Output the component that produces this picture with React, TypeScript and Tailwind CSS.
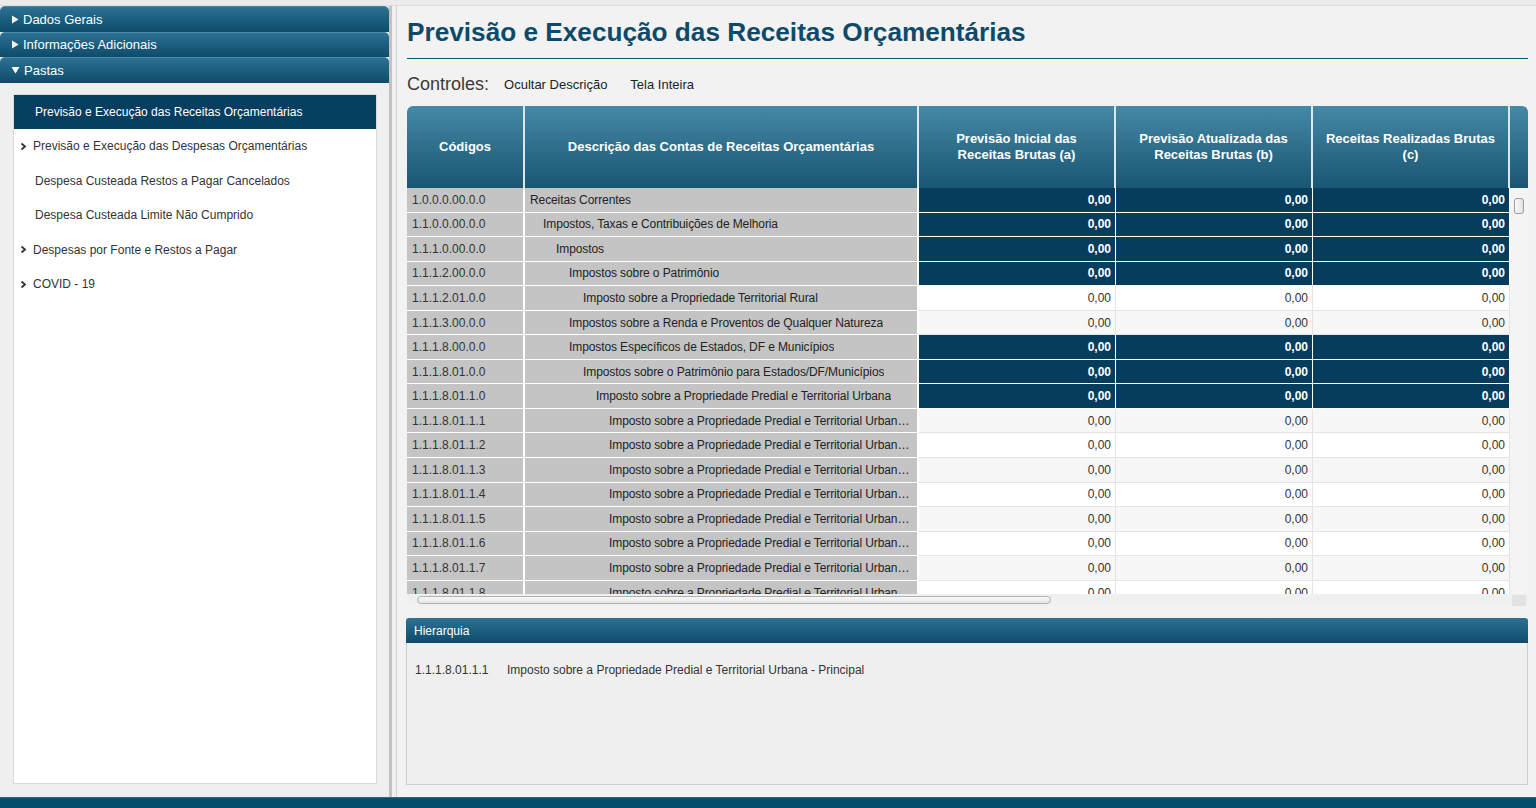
import React from "react";

type Row = { code: string; desc: string; level: number; bold: boolean };

const rows: Row[] = [
  { code: "1.0.0.0.00.0.0", desc: "Receitas Correntes", level: 0, bold: true },
  { code: "1.1.0.0.00.0.0", desc: "Impostos, Taxas e Contribuições de Melhoria", level: 1, bold: true },
  { code: "1.1.1.0.00.0.0", desc: "Impostos", level: 2, bold: true },
  { code: "1.1.1.2.00.0.0", desc: "Impostos sobre o Patrimônio", level: 3, bold: true },
  { code: "1.1.1.2.01.0.0", desc: "Imposto sobre a Propriedade Territorial Rural", level: 4, bold: false },
  { code: "1.1.1.3.00.0.0", desc: "Impostos sobre a Renda e Proventos de Qualquer Natureza", level: 3, bold: false },
  { code: "1.1.1.8.00.0.0", desc: "Impostos Específicos de Estados, DF e Municípios", level: 3, bold: true },
  { code: "1.1.1.8.01.0.0", desc: "Impostos sobre o Patrimônio para Estados/DF/Municípios", level: 4, bold: true },
  { code: "1.1.1.8.01.1.0", desc: "Imposto sobre a Propriedade Predial e Territorial Urbana", level: 5, bold: true },
  { code: "1.1.1.8.01.1.1", desc: "Imposto sobre a Propriedade Predial e Territorial Urbana - Principal", level: 6, bold: false },
  { code: "1.1.1.8.01.1.2", desc: "Imposto sobre a Propriedade Predial e Territorial Urbana - Multas e Juros", level: 6, bold: false },
  { code: "1.1.1.8.01.1.3", desc: "Imposto sobre a Propriedade Predial e Territorial Urbana - Dívida Ativa", level: 6, bold: false },
  { code: "1.1.1.8.01.1.4", desc: "Imposto sobre a Propriedade Predial e Territorial Urbana - Dívida Ativa - Multas", level: 6, bold: false },
  { code: "1.1.1.8.01.1.5", desc: "Imposto sobre a Propriedade Predial e Territorial Urbana - Principal - Outros", level: 6, bold: false },
  { code: "1.1.1.8.01.1.6", desc: "Imposto sobre a Propriedade Predial e Territorial Urbana - Multas - Outros", level: 6, bold: false },
  { code: "1.1.1.8.01.1.7", desc: "Imposto sobre a Propriedade Predial e Territorial Urbana - Dívida - Outros", level: 6, bold: false },
  { code: "1.1.1.8.01.1.8", desc: "Imposto sobre a Propriedade Predial e Territorial Urbana - Outros", level: 6, bold: false },
  { code: "1.1.1.8.01.1.9", desc: "Imposto sobre a Propriedade Predial e Territorial Urbana - Outros", level: 6, bold: false },
];

const indent = [
  "pl-[5px]",
  "pl-[18px]",
  "pl-[31px]",
  "pl-[44px]",
  "pl-[58px]",
  "pl-[71px]",
  "pl-[84px]",
];

const font = "font-['Liberation_Sans',Arial,sans-serif]";

function TriRight() {
  return (
    <svg width="8" height="9" viewBox="0 0 8 9" className="shrink-0">
      <polygon points="1,0.5 7.5,4.5 1,8.5" fill="#ffffff" />
    </svg>
  );
}
function TriDown() {
  return (
    <svg width="9" height="8" viewBox="0 0 9 8" className="shrink-0">
      <polygon points="0.5,1 8.5,1 4.5,7.5" fill="#ffffff" />
    </svg>
  );
}
function Chevron() {
  return (
    <svg width="7" height="9" viewBox="0 0 7 9" className="shrink-0">
      <polyline points="1.5,1.5 5,4.5 1.5,7.5" fill="none" stroke="#333" strokeWidth="1.8" />
    </svg>
  );
}

function AccHeader({ label, open }: { label: string; open?: boolean }) {
  return (
    <div className="h-[25.5px] shrink-0 flex items-center gap-[4px] pl-[11px] rounded-t-[5px] border-t border-[#4a8aa8] bg-gradient-to-b from-[#2c7193] to-[#0d4b6a] text-white text-[13px]">
      {open ? <TriDown /> : <TriRight />}
      <span>{label}</span>
    </div>
  );
}

function SideItem({ label, chevron, selected }: { label: string; chevron?: boolean; selected?: boolean }) {
  if (selected) {
    return (
      <div className="h-[34px] flex items-center pl-[21px] bg-[#053e5f] text-white text-[12px]">{label}</div>
    );
  }
  return (
    <div className={`h-[34.5px] flex items-center text-[12px] text-[#333] ${chevron ? "pl-[6px] gap-[6px]" : "pl-[21px]"}`}>
      {chevron && <Chevron />}
      <span>{label}</span>
    </div>
  );
}

function ValueCell({ bold, zebra }: { bold: boolean; zebra: boolean }) {
  const bg = bold
    ? "bg-[#063d5d] text-white font-bold border-white"
    : zebra
    ? "bg-[#f7f7f7] text-[#333] border-[#e4e4e4]"
    : "bg-white text-[#333] border-[#e4e4e4]";
  return (
    <div className={`w-[197px] shrink-0 h-full flex items-center justify-end pr-[4px] border-b border-r ${bg}`}>
      0,00
    </div>
  );
}

export default function App() {
  return (
    <div className={`${font} w-[1536px] h-[808px] bg-[#f0f0f0] flex flex-col overflow-hidden`}>
      <div className="h-[6px] shrink-0 bg-[#ebebeb] border-b border-[#dcdcdc]" />
      <div className="flex-1 flex min-h-0">
        {/* Sidebar */}
        <div className="w-[389px] shrink-0 flex flex-col bg-[#efefef]">
          <AccHeader label="Dados Gerais" />
          <AccHeader label="Informações Adicionais" />
          <AccHeader label="Pastas" open />
          <div className="flex-1 pl-[13px] pr-[12px] pt-[11.5px] pb-[13px] flex">
            <div className="flex-1 bg-white border border-[#d9d9d9] flex flex-col">
              <SideItem label="Previsão e Execução das Receitas Orçamentárias" selected />
              <SideItem label="Previsão e Execução das Despesas Orçamentárias" chevron />
              <SideItem label="Despesa Custeada Restos a Pagar Cancelados" />
              <SideItem label="Despesa Custeada Limite Não Cumprido" />
              <SideItem label="Despesas por Fonte e Restos a Pagar" chevron />
              <SideItem label="COVID - 19" chevron />
            </div>
          </div>
        </div>
        {/* Splitter */}
        <div className="w-[8px] shrink-0 border-l-[3px] border-[#c2c2c2] bg-[#f0f0f0] border-r border-r-[#d2d2d2]" />
        {/* Main */}
        <div className="flex-1 min-w-0 flex flex-col bg-[#f2f2f2] pt-[1px] pl-[10px] pr-[8px]">
          <div className="h-[52px] shrink-0 flex items-center border-b border-[#12506f]">
            <h1 className="text-[26.2px] font-bold text-[#0d4a6a]">Previsão e Execução das Receitas Orçamentárias</h1>
          </div>
          <div className="h-[47px] shrink-0 flex items-center pt-[4px]">
            <span className="text-[18px] text-[#3a3a3a]">Controles:</span>
            <span className="ml-[15px] text-[13px] text-[#222]">Ocultar Descrição</span>
            <span className="ml-[23px] text-[13px] text-[#222]">Tela Inteira</span>
          </div>
          {/* Table */}
          <div className="h-[500px] shrink-0 flex flex-col">
            {/* Header */}
            <div className="h-[82px] shrink-0 flex rounded-t-[6px] overflow-hidden bg-gradient-to-b from-[#4489a6] to-[#195673] text-white font-bold text-[13px]">
              <div className="w-[118px] shrink-0 flex items-center justify-center border-r-2 border-[#dde8ee]">Códigos</div>
              <div className="w-[394px] shrink-0 flex items-center justify-center border-r-2 border-[#dde8ee]">Descrição das Contas de Receitas Orçamentárias</div>
              <div className="w-[197px] shrink-0 flex items-center justify-center text-center leading-[16px] border-r-2 border-[#dde8ee]">Previsão Inicial das<br />Receitas Brutas (a)</div>
              <div className="w-[197px] shrink-0 flex items-center justify-center text-center leading-[16px] border-r-2 border-[#dde8ee]">Previsão Atualizada das<br />Receitas Brutas (b)</div>
              <div className="w-[197px] shrink-0 flex items-center justify-center text-center leading-[16px] border-r-2 border-[#dde8ee]">Receitas Realizadas Brutas<br />(c)</div>
              <div className="flex-1" />
            </div>
            {/* Body */}
            <div className="h-[406px] shrink-0 flex">
              <div className="w-[1103px] shrink-0 overflow-hidden text-[12px]">
                {rows.map((r, i) => (
                  <div key={r.code} className="h-[24.56px] flex">
                    <div className="w-[118px] shrink-0 h-full flex items-center pl-[5px] bg-[#c4c4c4] text-[#333] border-b border-r-2 border-white">{r.code}</div>
                    <div className={`w-[394px] shrink-0 h-full flex items-center pr-[3px] bg-[#c4c4c4] text-[#222] tracking-[-0.1px] border-b border-r-2 border-white ${indent[r.level]}`}>
                      <span className="truncate">{r.desc}</span>
                    </div>
                    <ValueCell bold={r.bold} zebra={i % 2 === 1} />
                    <ValueCell bold={r.bold} zebra={i % 2 === 1} />
                    <ValueCell bold={r.bold} zebra={i % 2 === 1} />
                  </div>
                ))}
              </div>
              <div className="flex-1 bg-[#f4f4f4] pt-[10px] flex justify-center">
                <div className="w-[10px] h-[16px] rounded-[3px] border border-[#9c9c9c] bg-gradient-to-r from-[#fafafa] to-[#e2e2e2]" />
              </div>
            </div>
            {/* Horizontal scrollbar */}
            <div className="h-[12px] shrink-0 flex bg-[#f0f0f0]">
              <div className="w-[1103px] shrink-0 pl-[10px] pt-[2px]">
                <div className="w-[634px] h-[8px] rounded-full border border-[#b0b0b0] bg-gradient-to-b from-[#fafafa] to-[#e4e4e4]" />
              </div>
              <div className="flex-1 flex justify-center pt-[1px]">
                <div className="w-[14px] h-[11px] bg-[#e2e2e2]" />
              </div>
            </div>
          </div>
          {/* Hierarquia */}
          <div className="mt-[12px] h-[25px] shrink-0 flex items-center pl-[8px] rounded-t-[3px] bg-gradient-to-b from-[#2c7294] to-[#0d4c6b] text-white text-[12px] -ml-[1px]">
            Hierarquia
          </div>
          <div className="h-[142px] shrink-0 bg-[#efefef] border border-t-0 border-[#cdcdcd] -ml-[1px] pl-[8px] pt-[18px] text-[12px] text-[#333]">
            <div className="flex">
              <span className="w-[92px]">1.1.1.8.01.1.1</span>
              <span>Imposto sobre a Propriedade Predial e Territorial Urbana - Principal</span>
            </div>
          </div>
        </div>
      </div>
      <div className="h-[11px] shrink-0 bg-[#034e6c] border-t border-[#2f6a84]" />
    </div>
  );
}
